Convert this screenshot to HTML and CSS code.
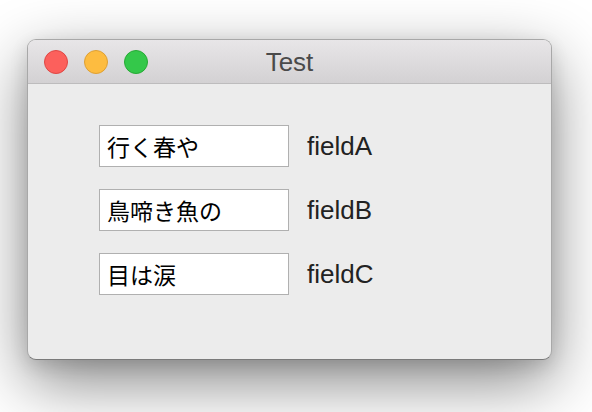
FILE: index.html
```html
<!DOCTYPE html>
<html>
<head>
<meta charset="utf-8">
<link rel="stylesheet" href="styles.css">
</head>
<body>
<div class="window">
  <div class="titlebar">
    <div class="lights">
      <span class="light red"></span>
      <span class="light yellow"></span>
      <span class="light green"></span>
    </div>
    <div class="title">Test</div>
  </div>
  <div class="content">
    <div class="row"><div class="field">行く春や</div><div class="label">fieldA</div></div>
    <div class="row"><div class="field">鳥啼き魚の</div><div class="label">fieldB</div></div>
    <div class="row"><div class="field">目は涙</div><div class="label">fieldC</div></div>
  </div>
</div>
</body>
</html>
```

FILE: styles.css
```css
html, body {
  margin: 0;
  padding: 0;
  background: #ffffff;
  width: 592px;
  height: 412px;
  overflow: hidden;
}
body {
  padding: 39px 0 0 27px;
  box-sizing: border-box;
  font-family: "Liberation Sans", "Noto Sans CJK JP", sans-serif;
}
.window {
  width: 525px;
  height: 321px;
  box-sizing: border-box;
  border-radius: 9px;
  background: #ececec;
  border: 1px solid #a8a8a8;
  border-bottom-color: #7a7a7a;
  box-shadow: 0 22px 64px rgba(0, 0, 0, 0.48), 0 6px 18px rgba(0, 0, 0, 0.12);
  display: flex;
  flex-direction: column;
  overflow: hidden;
}
.titlebar {
  height: 44px;
  box-sizing: border-box;
  background: linear-gradient(#e8e6e8, #d3d1d3);
  border-bottom: 1px solid #bdbcbd;
  display: flex;
  align-items: center;
  position: relative;
  flex: none;
}
.lights {
  display: flex;
  gap: 16px;
  padding-left: 16px;
}
.light {
  width: 24px;
  height: 24px;
  border-radius: 50%;
  box-sizing: border-box;
}
.red { background: #fc605c; border: 1px solid #df4744; }
.yellow { background: #fdbc40; border: 1px solid #dea034; }
.green { background: #34c84a; border: 1px solid #27aa35; }
.title {
  position: absolute;
  left: 0;
  right: 0;
  top: 2px;
  bottom: 0;
  display: flex;
  align-items: center;
  justify-content: center;
  font-size: 26px;
  color: #4a4a4a;
}
.content {
  padding: 41px 0 0 71px;
  display: flex;
  flex-direction: column;
  gap: 22px;
}
.row {
  display: flex;
  align-items: center;
  gap: 18px;
}
.field {
  width: 190px;
  height: 42px;
  box-sizing: border-box;
  background: #ffffff;
  border: 1px solid #b0b0b0;
  padding-left: 7px;
  display: flex;
  align-items: center;
  font-family: "Noto Sans CJK JP", sans-serif;
  font-size: 23px;
  color: #000;
}
.label {
  font-size: 26px;
  color: #222;
}
```
